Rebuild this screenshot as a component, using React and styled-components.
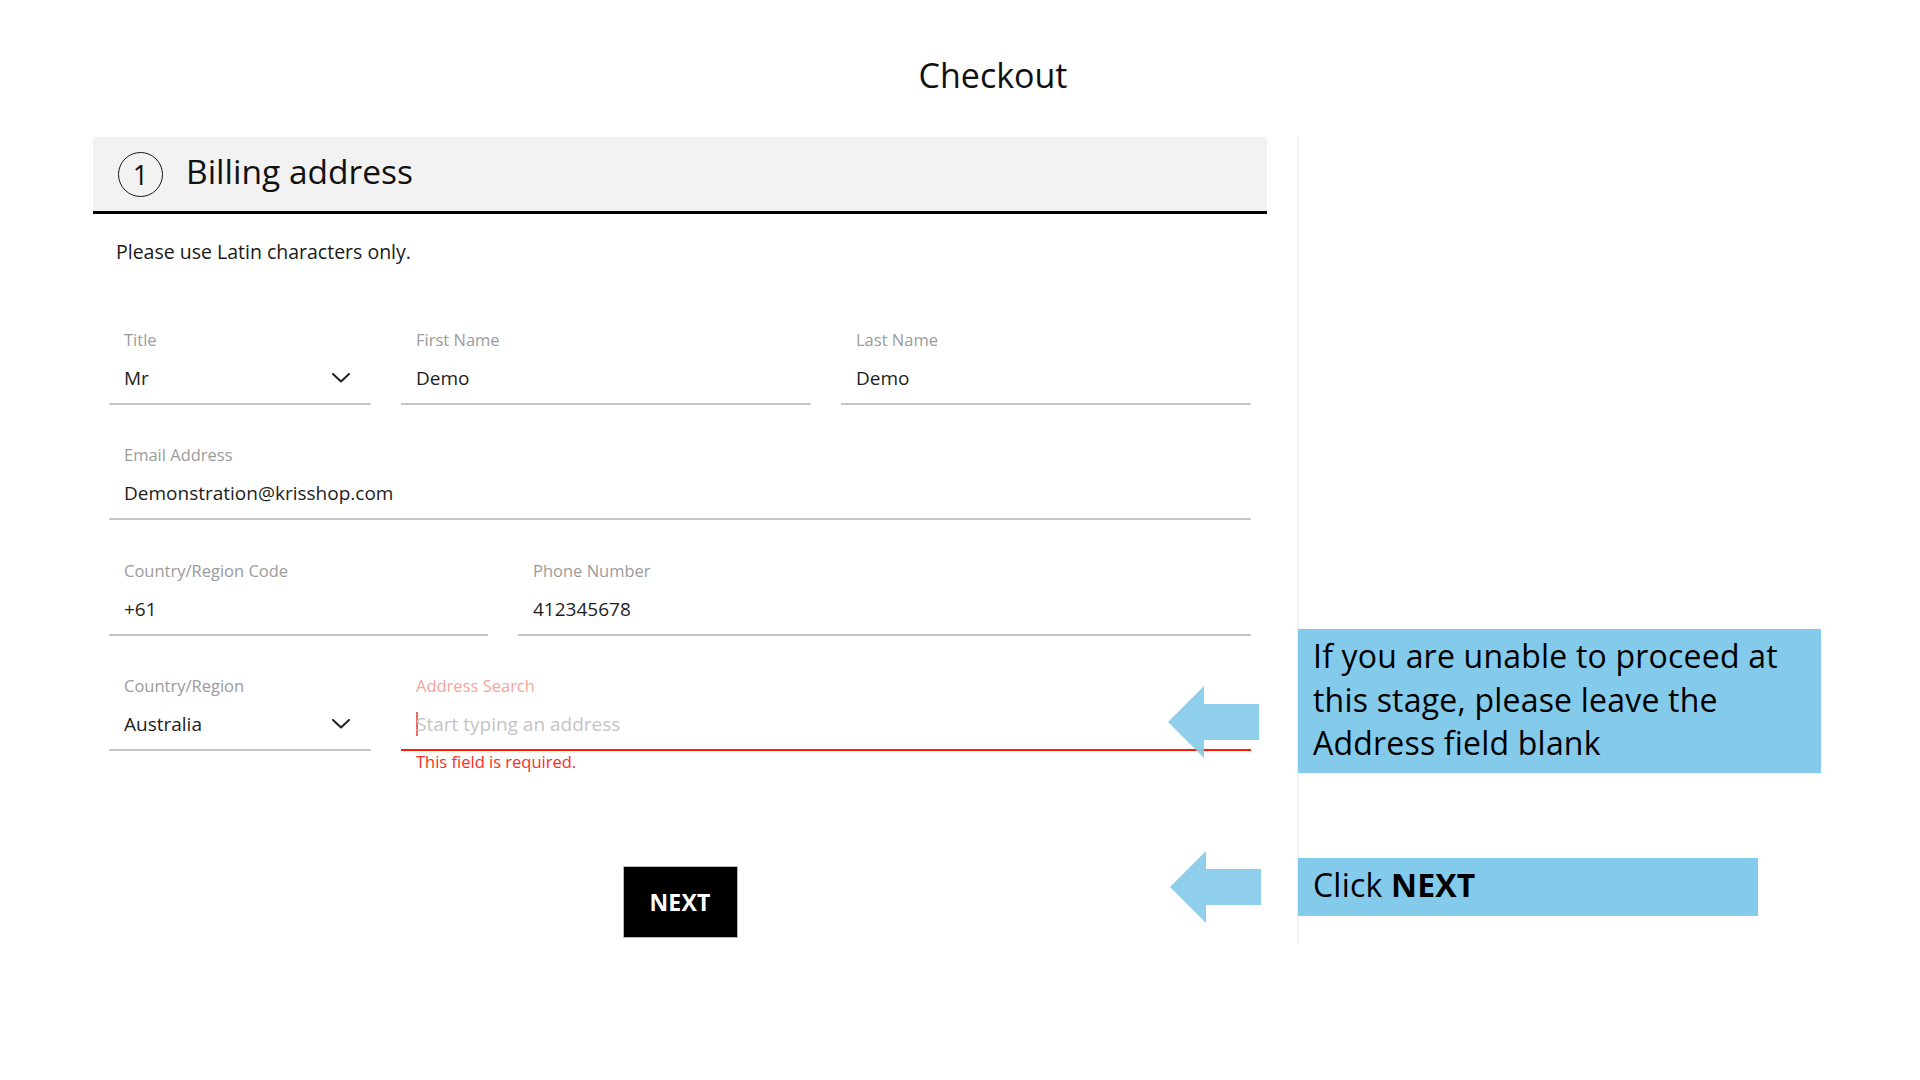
import React from "react";
import styled, { createGlobalStyle } from "styled-components";

const GlobalStyle = createGlobalStyle`
  html, body {
    margin: 0;
    padding: 0;
    background: #ffffff;
  }
  body {
    font-family: "Open Sans", "Noto Sans", Arial, sans-serif;
    color: #1d1d1d;
  }
  * { box-sizing: border-box; }
`;

const Page = styled.div`
  position: relative;
  width: 1920px;
  min-height: 1080px;
  padding-top: 52px;
`;

const Container = styled.div`
  width: 1800px;
  margin-left: 93px;
`;

const PageTitle = styled.h1`
  margin: 0;
  text-align: center;
  font-size: 34px;
  line-height: 46px;
  font-weight: 400;
  color: #111;
`;

const Columns = styled.div`
  display: flex;
  align-items: flex-start;
  gap: 30px;
  margin-top: 39px;
`;

const FormColumn = styled.section`
  width: 1174px;
  flex: none;
`;

const Sidebar = styled.aside`
  flex: 1;
  height: 806px;
  border-left: 2px solid #f0f0f0;
`;

const SectionHeader = styled.div`
  display: flex;
  align-items: center;
  gap: 23px;
  height: 77px;
  padding-left: 25px;
  background: #f2f2f2;
  border-bottom: 3px solid #000;
`;

const StepCircle = styled.span`
  display: flex;
  align-items: center;
  justify-content: center;
  width: 45px;
  height: 45px;
  border: 1.5px solid #1a1a1a;
  border-radius: 50%;
  font-size: 27px;
  line-height: 1;
  color: #111;
`;

const SectionTitle = styled.h2`
  margin: 0 0 7px 0;
  font-size: 33.5px;
  font-weight: 400;
  color: #111;
`;

const Note = styled.p`
  margin: 25px 0 0 23px;
  font-size: 19.5px;
  line-height: 26.6px;
  color: #1a1a1a;
`;

const Fields = styled.div`
  display: flex;
  flex-direction: column;
  gap: 39.5px;
  margin-top: 63px;
  padding: 0 16px;
`;

const Row = styled.div`
  display: grid;
  grid-template-columns: ${(p) => p.$cols};
  column-gap: 30px;
  align-items: start;
`;

const Field = styled.div`
  display: flex;
  flex-direction: column;
`;

const Label = styled.label`
  display: block;
  padding-left: 15px;
  font-size: 16.5px;
  line-height: 22px;
  color: ${(p) => (p.$error ? "#f7a49a" : "#9b9b9b")};
`;

const ValueRow = styled.div`
  display: flex;
  align-items: center;
  justify-content: space-between;
  height: 54px;
  padding: 2px 21px 0 15px;
  border-bottom: 2px solid ${(p) => (p.$error ? "#ff1a00" : "#c6c6c6")};
  font-size: 19px;
  color: #1d1d1d;
`;

const InputWrap = styled.div`
  display: flex;
  align-items: center;
  flex: 1;
`;

const Caret = styled.span`
  display: block;
  width: 2px;
  height: 24px;
  background: #e86a5c;
  margin-right: -2px;
`;

const TextInput = styled.input`
  flex: 1;
  border: none;
  outline: none;
  padding: 0;
  background: transparent;
  font-family: inherit;
  font-size: 19px;
  color: #1d1d1d;
  &::placeholder {
    color: #c4c4c4;
  }
`;

const ErrorText = styled.div`
  padding-left: 15px;
  font-size: 16.5px;
  line-height: 22px;
  color: #ff2b1c;
`;

const Actions = styled.div`
  display: flex;
  justify-content: center;
  margin-top: 93px;
`;

const NextButton = styled.button`
  width: 115px;
  height: 72px;
  background: #000;
  border: 1px solid #b8b8b8;
  color: #fff;
  font-family: "Open Sans", Arial, sans-serif;
  font-size: 23px;
  font-weight: 700;
  letter-spacing: 0.2px;
  cursor: pointer;
`;

const Arrow = styled.svg`
  position: absolute;
  left: ${(p) => p.$x}px;
  top: ${(p) => p.$y}px;
`;

const Callout = styled.div`
  position: absolute;
  left: 1298px;
  top: ${(p) => p.$y}px;
  width: ${(p) => p.$w}px;
  height: ${(p) => p.$h}px;
  padding: 5px 0 0 15px;
  background: #84caeb;
  font-family: "Open Sans", "Noto Sans", Arial, sans-serif;
  font-size: 32px;
  line-height: 43.5px;
  letter-spacing: 0.2px;
  color: #000;
  b {
    font-weight: 700;
  }
`;

const Chevron = () => (
  <svg width="18" height="10" viewBox="0 0 18 10" aria-hidden="true">
    <polyline
      points="1,1 9,8.5 17,1"
      fill="none"
      stroke="#222"
      strokeWidth="2"
      strokeLinecap="round"
      strokeLinejoin="round"
    />
  </svg>
);

const LeftArrow = ({ x, y }) => (
  <Arrow $x={x} $y={y} width="91" height="72" viewBox="0 0 91 72">
    <polygon
      points="0,36 36,0 36,18 91,18 91,54 36,54 36,72"
      fill="#86cbea"
      fillOpacity="0.92"
    />
  </Arrow>
);

const TextField = ({ label, value, select }) => (
  <Field>
    <Label>{label}</Label>
    <ValueRow>
      <span>{value}</span>
      {select && <Chevron />}
    </ValueRow>
  </Field>
);

export default function App() {
  return (
    <>
      <GlobalStyle />
      <Page>
        <Container>
          <PageTitle>Checkout</PageTitle>
          <Columns>
            <FormColumn>
              <SectionHeader>
                <StepCircle>1</StepCircle>
                <SectionTitle>Billing address</SectionTitle>
              </SectionHeader>
              <Note>Please use Latin characters only.</Note>
              <Fields>
                <Row $cols="262px 1fr 1fr">
                  <TextField label="Title" value="Mr" select />
                  <TextField label="First Name" value="Demo" />
                  <TextField label="Last Name" value="Demo" />
                </Row>
                <Row $cols="1fr">
                  <TextField label="Email Address" value="Demonstration@krisshop.com" />
                </Row>
                <Row $cols="379px 1fr">
                  <TextField label="Country/Region Code" value="+61" />
                  <TextField label="Phone Number" value="412345678" />
                </Row>
                <Row $cols="262px 1fr">
                  <TextField label="Country/Region" value="Australia" select />
                  <Field>
                    <Label $error>Address Search</Label>
                    <ValueRow $error>
                      <InputWrap>
                        <Caret />
                        <TextInput placeholder="Start typing an address" readOnly />
                      </InputWrap>
                    </ValueRow>
                    <ErrorText>This field is required.</ErrorText>
                  </Field>
                </Row>
              </Fields>
              <Actions>
                <NextButton>NEXT</NextButton>
              </Actions>
            </FormColumn>
            <Sidebar />
          </Columns>
        </Container>

        <LeftArrow x={1168} y={686} />
        <Callout $y={629} $w={523} $h={144}>
          If you are unable to proceed at
          <br />
          this stage, please leave the
          <br />
          Address field blank
        </Callout>

        <LeftArrow x={1170} y={851} />
        <Callout $y={858} $w={460} $h={58}>
          Click <b>NEXT</b>
        </Callout>
      </Page>
    </>
  );
}
